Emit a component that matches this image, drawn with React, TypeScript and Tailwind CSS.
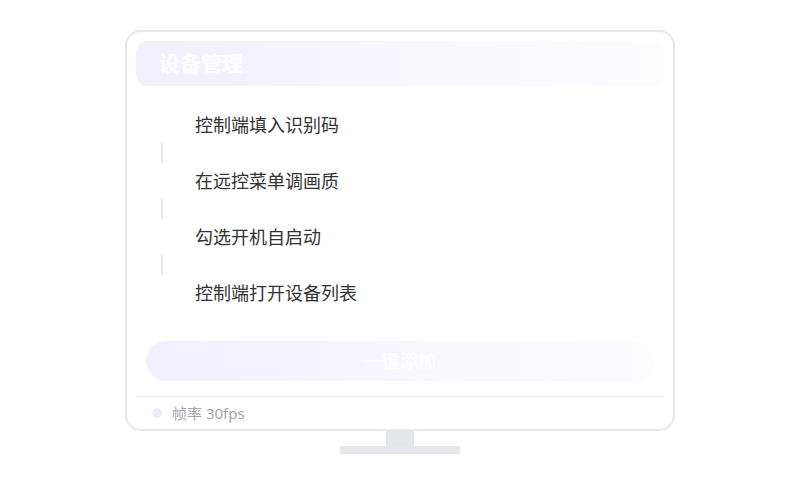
import React from "react";

const steps = ["控制端填入识别码", "在远控菜单调画质", "勾选开机自启动", "控制端打开设备列表"];

export default function App() {
  return (
    <div
      className="w-[800px] h-[500px] bg-white flex flex-col items-center pt-[30px]"
      style={{ fontFamily: '"Noto Sans", "Noto Sans CJK SC", sans-serif' }}
    >
      <div className="w-[550px] h-[401px] border-2 border-[#e5e7eb] rounded-2xl p-[9px] pb-0 flex flex-col bg-white">
        <div className="h-[45px] rounded-xl bg-gradient-to-r from-[#f2efff] to-[#fdfcff] flex items-center pl-[23px]">
          <span className="text-[21px] font-bold text-white leading-none">设备管理</span>
        </div>
        <div className="mt-[27px] flex flex-col">
          {steps.map((s, i) => (
            <div key={s} className="flex flex-col">
              <div className="h-6 leading-6 text-lg text-[#333333] pl-[59px]">{s}</div>
              {i < steps.length - 1 && (
                <div className="h-8 flex items-center pl-[25px]">
                  <div className="w-0.5 h-5 bg-[#e5e7eb]" />
                </div>
              )}
            </div>
          ))}
        </div>
        <div className="mt-[36px] mx-[10px] h-10 rounded-full bg-gradient-to-r from-[#f2efff] to-[#fdfcff] flex items-center justify-center">
          <span className="text-lg text-white">一键添加</span>
        </div>
        <div className="mt-[15px] h-px bg-[#eeeff2]" />
        <div className="flex-1 flex items-center pl-[16px] gap-[10px]">
          <div className="w-2.5 h-2.5 rounded-full bg-[#efebfe]" />
          <span className="text-[15px] text-[#a3a6ad]">帧率 30fps</span>
        </div>
      </div>
      <div className="w-[28px] h-[15px] bg-[#e2e5e9]" />
      <div className="w-[120px] h-2 bg-[#e5e7eb]" />
    </div>
  );
}
